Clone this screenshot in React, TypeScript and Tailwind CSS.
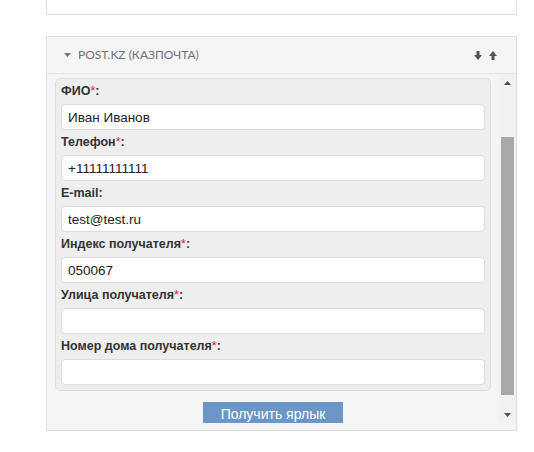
import React from 'react';

type Field = {
  label: string;
  required?: boolean;
  value: string;
};

const fields: Field[] = [
  { label: 'ФИО', required: true, value: 'Иван Иванов' },
  { label: 'Телефон', required: true, value: '+11111111111' },
  { label: 'E-mail', value: 'test@test.ru' },
  { label: 'Индекс получателя', required: true, value: '050067' },
  { label: 'Улица получателя', required: true, value: '' },
  { label: 'Номер дома получателя', required: true, value: '' },
];

const ArrowDown = () => (
  <svg width="8" height="9" viewBox="0 0 8 9" className="fill-[#555]">
    <rect x="2.5" y="0" width="3" height="5" />
    <polygon points="0,4 8,4 4,9" />
  </svg>
);

const ArrowUp = () => (
  <svg width="8" height="9" viewBox="0 0 8 9" className="fill-[#555]">
    <polygon points="0,5 8,5 4,0" />
    <rect x="2.5" y="4" width="3" height="5" />
  </svg>
);

// fake scrollbar, drawn so it looks the same in every browser
const ScrollTrack = () => (
  <div className="w-[17px] shrink-0 bg-[#f1f1f1] flex flex-col items-center">
    <div className="h-[17px] w-full flex items-center justify-center">
      <svg width="7" height="4" viewBox="0 0 7 4" className="fill-[#505050]">
        <polygon points="0,4 7,4 3.5,0" />
      </svg>
    </div>
    <div className="h-[46px]" />
    <div className="w-[13px] h-[258px] bg-[#a8a8a8]" />
    <div className="flex-1" />
    <div className="h-[17px] w-full flex items-center justify-center">
      <svg width="7" height="4" viewBox="0 0 7 4" className="fill-[#505050]">
        <polygon points="0,0 7,0 3.5,4" />
      </svg>
    </div>
  </div>
);

const FormField = ({ field }: { field: Field }) => (
  <div>
    <div className="h-[25px] flex items-center text-[12.5px] font-bold text-[#333]">
      {field.label}
      {field.required && <span className="text-[#e02020] font-normal">*</span>}
      :
    </div>
    <input
      readOnly
      value={field.value}
      className="block w-full h-[26px] rounded-[4px] border border-[#dcdcdc] bg-white px-[6px] text-[13.5px] text-[#222] outline-none"
    />
  </div>
);

export default function App() {
  return (
    <div className="w-[534px] h-[452px] bg-white font-['Liberation_Sans',Arial,sans-serif]">
      <div className="ml-[46px] w-[471px]">
        {/* previous block, only its bottom edge is in view */}
        <div className="h-[15px] bg-white border-x border-b border-[#dddddd]" />

        <div className="mt-[21px] border border-[#dddddd] bg-[#f5f5f5]">
          <div className="h-[37px] flex items-center justify-between pl-[17px] pr-[19px] border-b border-[#e3e3e3] bg-[#f5f5f5]">
            <div className="flex items-center gap-[7px] font-['Lato',sans-serif] text-[12px] text-[#707070]">
              <svg width="7" height="4" viewBox="0 0 7 4" className="fill-[#777]">
                <polygon points="0,0 7,0 3.5,4" />
              </svg>
              <span>POST.KZ (КАЗПОЧТА)</span>
            </div>
            <div className="flex items-center gap-[7px]">
              <ArrowDown />
              <ArrowUp />
            </div>
          </div>

          <div className="pb-[7px]">
            <div className="h-[349px] flex overflow-hidden">
              <div className="flex-1 overflow-hidden px-[8px] pt-[5px]">
                <div className="rounded-[5px] border border-[#dddddd] bg-[#eeeeee] px-[5px] pb-[5px] -mt-px">
                  {fields.map((f) => (
                    <FormField key={f.label} field={f} />
                  ))}
                </div>
                <div className="flex justify-center mt-[11px]">
                  <button className="w-[140px] h-[30px] bg-[#6b96c6] text-white text-[14px] pb-[5px]">
                    Получить ярлык
                  </button>
                </div>
              </div>
              <ScrollTrack />
            </div>
          </div>
        </div>
      </div>
    </div>
  );
}
